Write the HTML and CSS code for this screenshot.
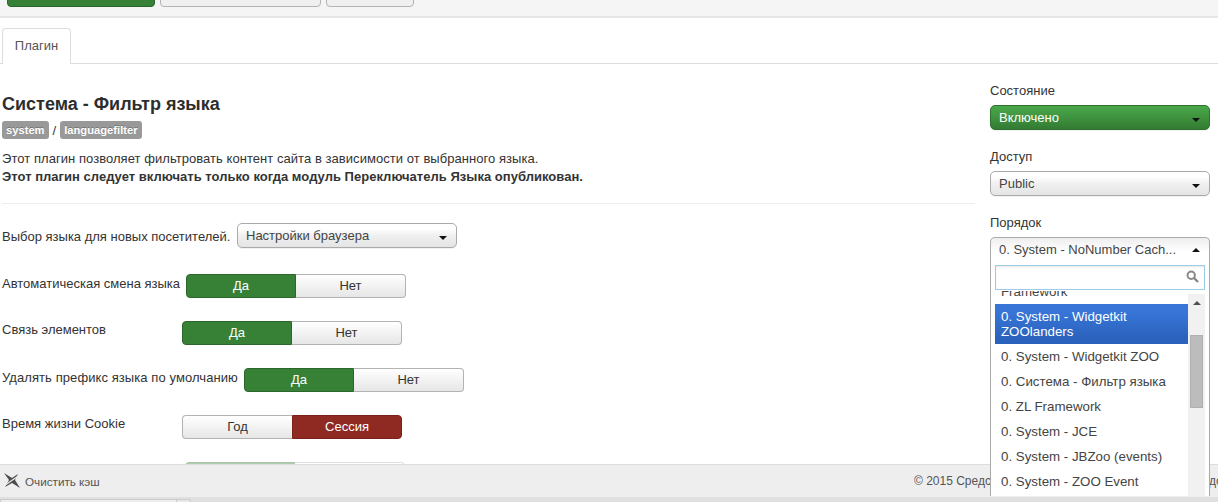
FILE: index.html
```html
<!DOCTYPE html>
<html lang="ru">
<head>
<meta charset="utf-8">
<title>Плагин</title>
<link rel="stylesheet" href="styles.css">
</head>
<body>
<div class="toolbar">
  <span class="tb tb-green"></span>
  <span class="tb tb-wide"></span>
  <span class="tb tb-small"></span>
</div>
<div class="tabs"><span class="tab">Плагин</span></div>
<div class="content">
  <main class="main">
    <h1>Система - Фильтр языка</h1>
    <div class="badges"><span class="badge">system</span><span class="slash">/</span><span class="badge">languagefilter</span></div>
    <p class="desc">Этот плагин позволяет фильтровать контент сайта в зависимости от выбранного языка.<br><b>Этот плагин следует включать только когда модуль Переключатель Языка опубликован.</b></p>
    <hr class="rule">
    <div class="row row-select">
      <span class="lbl lbl-select">Выбор языка для новых посетителей.</span>
      <span class="sel sel-lang"><span>Настройки браузера</span><i class="caret"></i></span>
    </div>
    <div class="row row-auto">
      <span class="lbl lbl-auto">Автоматическая смена языка</span>
      <span class="sw"><span class="on-green">Да</span><span class="off">Нет</span></span>
    </div>
    <div class="row">
      <span class="lbl lbl-fixed">Связь элементов</span>
      <span class="sw"><span class="on-green">Да</span><span class="off">Нет</span></span>
    </div>
    <div class="row">
      <span class="lbl lbl-prefix">Удалять префикс языка по умолчанию</span>
      <span class="sw"><span class="on-green">Да</span><span class="off">Нет</span></span>
    </div>
    <div class="row">
      <span class="lbl lbl-fixed">Время жизни Cookie</span>
      <span class="sw"><span class="off off-left">Год</span><span class="on-red">Сессия</span></span>
    </div>
    <div class="row row-last">
      <span class="sw"><span class="on-green faded"></span><span class="off faded"></span></span>
    </div>
  </main>
  <aside class="side">
    <div class="side-lbl">Состояние</div>
    <div class="sel sel-green"><span>Включено</span><i class="caret"></i></div>
    <div class="side-lbl">Доступ</div>
    <div class="sel"><span>Public</span><i class="caret"></i></div>
    <div class="side-lbl">Порядок</div>
    <div class="sel sel-open"><span>0. System - NoNumber Cach...</span><i class="caret caret-up"></i></div>
  </aside>
</div>
<div class="drop">
  <div class="search">
    <svg class="search-ico" width="13" height="13" viewBox="0 0 13 13"><circle cx="5.2" cy="5.2" r="3.7" fill="none" stroke="#888" stroke-width="2"/><path d="M8 8l4 4" stroke="#888" stroke-width="2.4"/></svg>
  </div>
  <div class="list-wrap">
    <ul class="list">
      <li class="clip"><span class="clip-text">Framework</span></li>
      <li class="hl">0. System - Widgetkit ZOOlanders</li>
      <li>0. System - Widgetkit ZOO</li>
      <li>0. Система - Фильтр языка</li>
      <li>0. ZL Framework</li>
      <li>0. System - JCE</li>
      <li>0. System - JBZoo (events)</li>
      <li>0. System - ZOO Event</li>
    </ul>
    <div class="scroll"><i class="arrow"></i><i class="thumb"></i></div>
  </div>
</div>
<footer class="status">
  <span class="cache">
    <svg width="18" height="18" viewBox="0 0 18 18"><path d="M1 1l8 5 6-4-3 6 5 8-8-5-7 4 4-7z" fill="#4d4d4d"/><path d="M1.500 13.500L16 3.500" stroke="#eee" stroke-width="1.200"/></svg>
    Очистить кэш
  </span>
  <span class="copy"><span class="copy-a">© 2015 Средство</span><span>до</span></span>
</footer>
<div class="bottom"><span class="bottom-tab"></span><span class="bottom-tab2"></span></div>
</body>
</html>
```
FILE: styles.css
```css
* { box-sizing: border-box; }
html, body { margin: 0; height: 502px; overflow: hidden; }
body { position: relative; display: flex; flex-direction: column; font-family: "Liberation Sans", Arial, sans-serif; font-size: 13px; color: #333; background: #fff; }
.toolbar { height: 18px; flex: none; background: #f5f5f5; border-bottom: 2px solid #e6e6e6; display: flex; align-items: flex-end; gap: 5px; padding: 0 0 9px 7px; overflow: hidden; }
.tb { display: block; height: 14px; border-radius: 0 0 4px 4px; border: 1px solid #b3b3b3; background: #f0f0f0; }
.tb-green { width: 148px; background: #378137; border-color: #2c662c; }
.tb-wide { width: 161px; }
.tb-small { width: 88px; }
.tabs { height: 46px; flex: none; border-bottom: 1px solid #ddd; padding: 10px 0 0 2px; }
.tab { display: block; width: 69px; height: 36px; background: #fff; border: 1px solid #ddd; border-bottom: 0; border-radius: 4px 4px 0 0; text-align: center; line-height: 34px; color: #555; }
.content { flex: 1; min-height: 0; display: flex; overflow: hidden; }
.main { width: 975px; flex: none; padding: 30px 0 0 2px; }
h1 { margin: 0; font-size: 18px; line-height: 20px; color: #2d2d2d; }
.badges { display: flex; align-items: center; margin-top: 7px; height: 18px; }
.badge { background: #999; color: #fff; font-size: 11.2px; font-weight: bold; line-height: 18px; height: 18px; padding: 0 4px; border-radius: 3px; text-shadow: 0 -1px 0 rgba(0,0,0,.25); }
.slash { margin: 0 4px; }
.desc { margin: 11px 0 0; font-size: 13px; line-height: 18px; letter-spacing: .05px; }
.desc b { letter-spacing: .025px; }
.rule { border: 0; border-top: 1px solid #eee; margin: 17px 0 0; }
.row { display: flex; margin-top: 23px; height: 24px; }
.row-select { margin-top: 19px; height: 25px; }
.row-auto { margin-top: 26px; }
.lbl { font-size: 13px; line-height: 19px; color: #333; white-space: nowrap; flex: none; }
.lbl-select { width: 235px; line-height: 27px; }
.lbl-auto { width: 184px; }
.lbl-prefix { width: 242px; letter-spacing: .08px; }
.lbl-fixed { width: 180px; line-height: 17px; }
.row-last { margin-left: 183px; }
.sw { display: flex; width: 220px; height: 24px; }
.sw > span { display: block; width: 110px; text-align: center; font-size: 13px; }
.on-green { background: #378137; color: #fff; border: 1px solid #2c662c; border-radius: 4px 0 0 4px; line-height: 22px; }
.faded { opacity: .4; }
.on-red { background: #8f2a22; color: #fff; border: 1px solid #7a211b; border-radius: 0 4px 4px 0; line-height: 22px; }
.off { background: linear-gradient(#fff, #e6e6e6); color: #333; border: 1px solid #b3b3b3; border-left: 0; border-radius: 0 4px 4px 0; line-height: 22px; }
.off-left { border: 1px solid #b3b3b3; border-right: 0; border-radius: 4px 0 0 4px; }
.sel { position: relative; display: flex; align-items: center; justify-content: space-between; width: 220px; height: 25px; padding: 0 9px 0 8px; border: 1px solid #aaa; border-radius: 5px; background: linear-gradient(#fff 20%, #f0f0f0 50%, #e4e4e4 100%); color: #444; box-shadow: 0 1px 0 rgba(0,0,0,.05); font-size: 13px; white-space: nowrap; }
.caret { display: block; width: 0; height: 0; margin-top: 4px; border-left: 4px solid transparent; border-right: 4px solid transparent; border-top: 4px solid #111; }
.caret-up { margin-top: 2px; border-top: 0; border-bottom: 4px solid #111; }
.side { width: 220px; flex: none; margin-left: 15px; padding-top: 18px; }
.side-lbl { line-height: 18px; height: 18px; font-size: 13px; margin-bottom: 5px; }
.sel + .side-lbl { margin-top: 18px; }
.sel-green { background: linear-gradient(#4aa84a 0%, #3f933f 50%, #327a32 100%); border-color: #2f6f2f; color: #fff; }
.sel-open { height: 28px; border-radius: 5px 5px 0 0; border-bottom: 0; background: linear-gradient(#eee, #fff 50%); padding-bottom: 5px; box-shadow: none; }
.drop { position: absolute; left: 990px; top: 262px; width: 220px; height: 234px; background: #fff; border: 1px solid #aaa; border-top: 0; border-bottom: 0; padding: 3px 4px 0; z-index: 3; font-size: 13.3px; color: #444; }
.search { position: relative; height: 25px; border: 1px solid #9ecbe8; box-shadow: inset 0 1px 2px rgba(0,0,0,.1); }
.search-ico { position: absolute; right: 5px; top: 4px; }
.list-wrap { display: flex; height: 205px; margin-top: 1px; overflow: hidden; }
.list { list-style: none; margin: 0; padding: 0; width: 193px; flex: none; overflow: hidden; }
.list li { padding: 5px 6px; line-height: 15px; }
.list .clip { position: relative; height: 13px; padding: 0; overflow: hidden; }
.clip-text { position: absolute; left: 6px; top: -7px; white-space: nowrap; }
.list .hl { color: #fff; background: linear-gradient(#3875d7 20%, #2a62bc 90%); }
.scroll { position: relative; width: 17px; margin-top: 3px; background: #f1f1f1; }
.arrow { position: absolute; left: 5px; top: 7px; width: 0; height: 0; border-left: 4px solid transparent; border-right: 4px solid transparent; border-bottom: 4px solid #505050; }
.thumb { position: absolute; left: 2px; top: 41px; width: 13px; height: 73px; background: #bcbcbc; border: 1px solid #b0b0b0; }
.status { height: 33px; flex: none; background: #eee; border-top: 1px solid #ddd; display: flex; align-items: center; justify-content: space-between; padding: 0 0 0 3px; font-size: 11.7px; color: #555; position: relative; z-index: 2; }
.cache { display: flex; align-items: center; gap: 4px; }
.copy { display: flex; font-size: 12px; white-space: nowrap; width: 304px; overflow: hidden; }
.copy-a { width: 76px; flex: none; overflow: hidden; margin-right: 219px; }
.bottom { height: 5px; flex: none; background: #e0e0e0; position: relative; z-index: 4; display: flex; align-items: flex-end; }
.bottom-tab { display: block; width: 177px; height: 3px; border: 1px solid #ccc; border-bottom: 0; background: #eee; }
.bottom-tab2 { display: block; width: 14px; height: 3px; border: 1px solid #ccc; border-left: 0; border-bottom: 0; border-radius: 0 3px 0 0; background: #e8e8e8; }
```
